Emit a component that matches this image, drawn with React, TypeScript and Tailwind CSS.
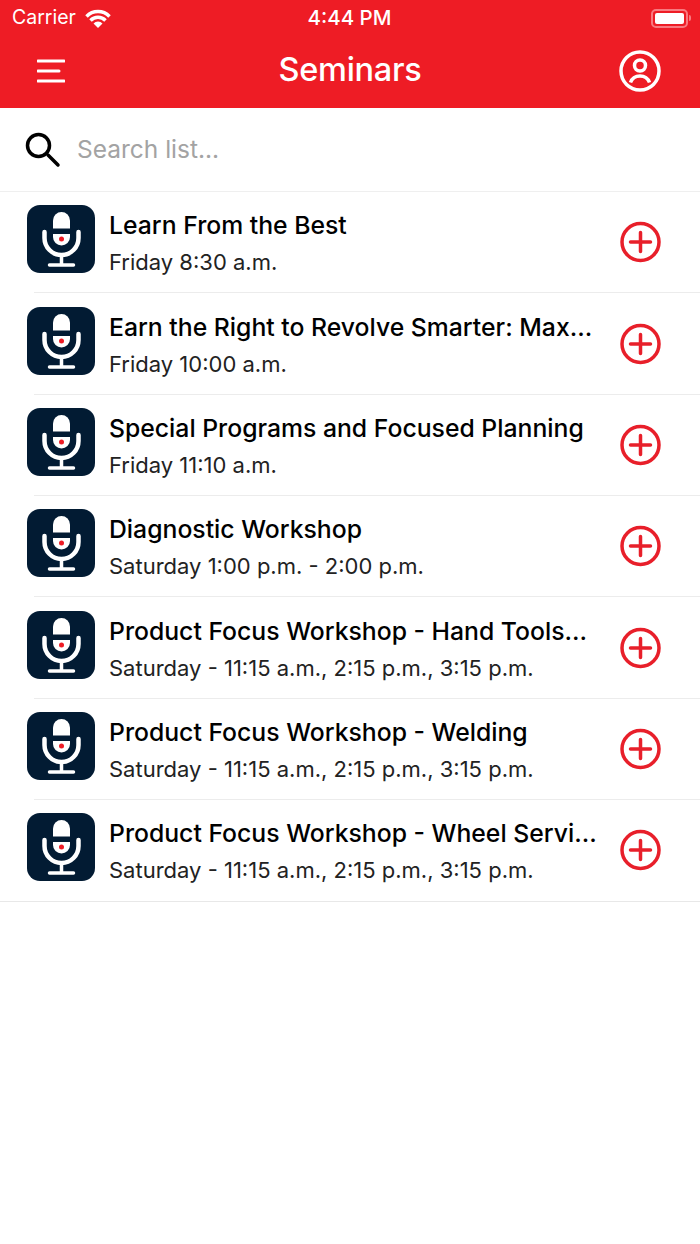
import React from 'react';

const seminars = [
  { title: 'Learn From the Best', time: 'Friday 8:30 a.m.' },
  { title: 'Earn the Right to Revolve Smarter: Max...', time: 'Friday 10:00 a.m.' },
  { title: 'Special Programs and Focused Planning', time: 'Friday 11:10 a.m.' },
  { title: 'Diagnostic Workshop', time: 'Saturday 1:00 p.m. - 2:00 p.m.' },
  { title: 'Product Focus Workshop - Hand Tools...', time: 'Saturday - 11:15 a.m., 2:15 p.m., 3:15 p.m.' },
  { title: 'Product Focus Workshop - Welding', time: 'Saturday - 11:15 a.m., 2:15 p.m., 3:15 p.m.' },
  { title: 'Product Focus Workshop - Wheel Servi...', time: 'Saturday - 11:15 a.m., 2:15 p.m., 3:15 p.m.' },
];

const MicIcon = () => (
  <svg width="68" height="68" viewBox="0 0 68 68" className="shrink-0">
    <rect width="68" height="68" rx="13" fill="#021b33" />
    <path d="M26 23.500V15.500a8.500 8.500 0 0 1 17 0V23.500Z" fill="#fff" />
    <path d="M26 29h17v3a8.500 8.500 0 0 1-17 0Z" fill="#fff" />
    <path d="M17.500 27v6a17 17 0 0 0 34 0v-6" fill="none" stroke="#fff" strokeWidth="4.500" strokeLinecap="round" />
    <path d="M34.500 50v9M22.500 60h24" fill="none" stroke="#fff" strokeWidth="3.500" strokeLinecap="round" />
    <circle cx="34.500" cy="34" r="2.500" fill="#ee1c25" />
  </svg>
);

const PlusIcon = () => (
  <svg width="42" height="42" viewBox="0 0 42 42" className="shrink-0">
    <circle cx="21.500" cy="21" r="18.500" fill="none" stroke="#e81f2a" strokeWidth="3.500" />
    <path d="M21.500 11.500v19M11.500 21h20" fill="none" stroke="#e81f2a" strokeWidth="3.500" strokeLinecap="round" />
  </svg>
);

const App: React.FC = () => {
  return (
    <div className="w-[700px] h-[1244px] bg-white font-['Inter','Noto_Sans',sans-serif]">
      <div className="h-[108px] bg-[#ee1c25] text-white">
        <div className="h-[36px] flex items-center justify-between pl-3 pr-[9px]">
          <div className="flex items-center gap-[9px] w-[198px]">
            <span className="text-[19.500px] leading-none">Carrier</span>
            <svg width="26" height="19" viewBox="0 0 26 19">
              <path d="M1.500 7.500a16 16 0 0 1 23 0" fill="none" stroke="#fff" strokeWidth="3.500" />
              <path d="M5.500 11.500a10.500 10.500 0 0 1 15 0" fill="none" stroke="#fff" strokeWidth="3.500" />
              <path d="M8.500 14.500a6 6 0 0 1 9 0l-4.500 4.500Z" fill="#fff" />
            </svg>
          </div>
          <span className="text-[20.500px] leading-none font-medium">4:44 PM</span>
          <div className="w-[202px] flex justify-end items-center">
            <div className="w-[37px] h-[19px] rounded-[5px] border-2 border-[#f87a80] p-[2px]">
              <div className="w-full h-full rounded-[2px] bg-white" />
            </div>
            <div className="w-[2px] h-[6px] ml-[1px] rounded-r bg-[#f87a80]" />
          </div>
        </div>
        <div className="h-[70px] flex items-center justify-between pl-[37px] pr-[39px]">
          <div className="w-[44px]">
            <svg width="28" height="24" viewBox="0 0 28 24">
              <path d="M1 2h26M1 12h21M1 22h26" fill="none" stroke="#fff" strokeWidth="3" strokeLinecap="round" />
            </svg>
          </div>
          <h1 className="text-[32.500px] leading-none font-[450] tracking-[-0.3px] mb-[2px]">Seminars</h1>
          <svg width="42" height="42" viewBox="0 0 42 42">
            <circle cx="21" cy="21" r="19" fill="none" stroke="#fff" strokeWidth="3.500" />
            <circle cx="21" cy="15.500" r="5.500" fill="none" stroke="#fff" strokeWidth="3.500" />
            <path d="M11.500 32.500c1.500-4 5-6.500 9.500-6.500s8 2.500 9.500 6.500" fill="none" stroke="#fff" strokeWidth="3.500" />
          </svg>
        </div>
      </div>

      <div className="h-[84px] flex items-center pl-[25px] border-b border-[#efefef]">
        <svg width="36" height="36" viewBox="0 0 36 36" className="shrink-0">
          <circle cx="13.500" cy="13.500" r="11" fill="none" stroke="#000" strokeWidth="3.500" />
          <path d="M23 23 33 33" stroke="#000" strokeWidth="3.500" strokeLinecap="round" />
        </svg>
        <span className="ml-[16px] text-[24.500px] leading-none text-[#a3a3a3]">Search list...</span>
      </div>

      <ul className="border-b border-[#e8e8e8]">
        {seminars.map((seminar, index) => (
          <li key={index} className="relative h-[101.350px] flex pl-[27px] pr-[39px] pt-[13.400px]">
            <MicIcon />
            <div className="ml-[14px] flex-1 min-w-0">
              <div className="text-[24.750px] leading-[32px] mt-[4px] font-[450] text-black whitespace-nowrap">{seminar.title}</div>
              <div className="text-[22px] leading-[28px] mt-[7px] text-[#222] whitespace-nowrap">{seminar.time}</div>
            </div>
            <div className="mt-[16px]">
              <PlusIcon />
            </div>
            {index < seminars.length - 1 && (
              <div className="absolute left-[34px] right-0 bottom-0 h-px bg-[#ececec]" />
            )}
          </li>
        ))}
      </ul>
    </div>
  );
};

export default App;
